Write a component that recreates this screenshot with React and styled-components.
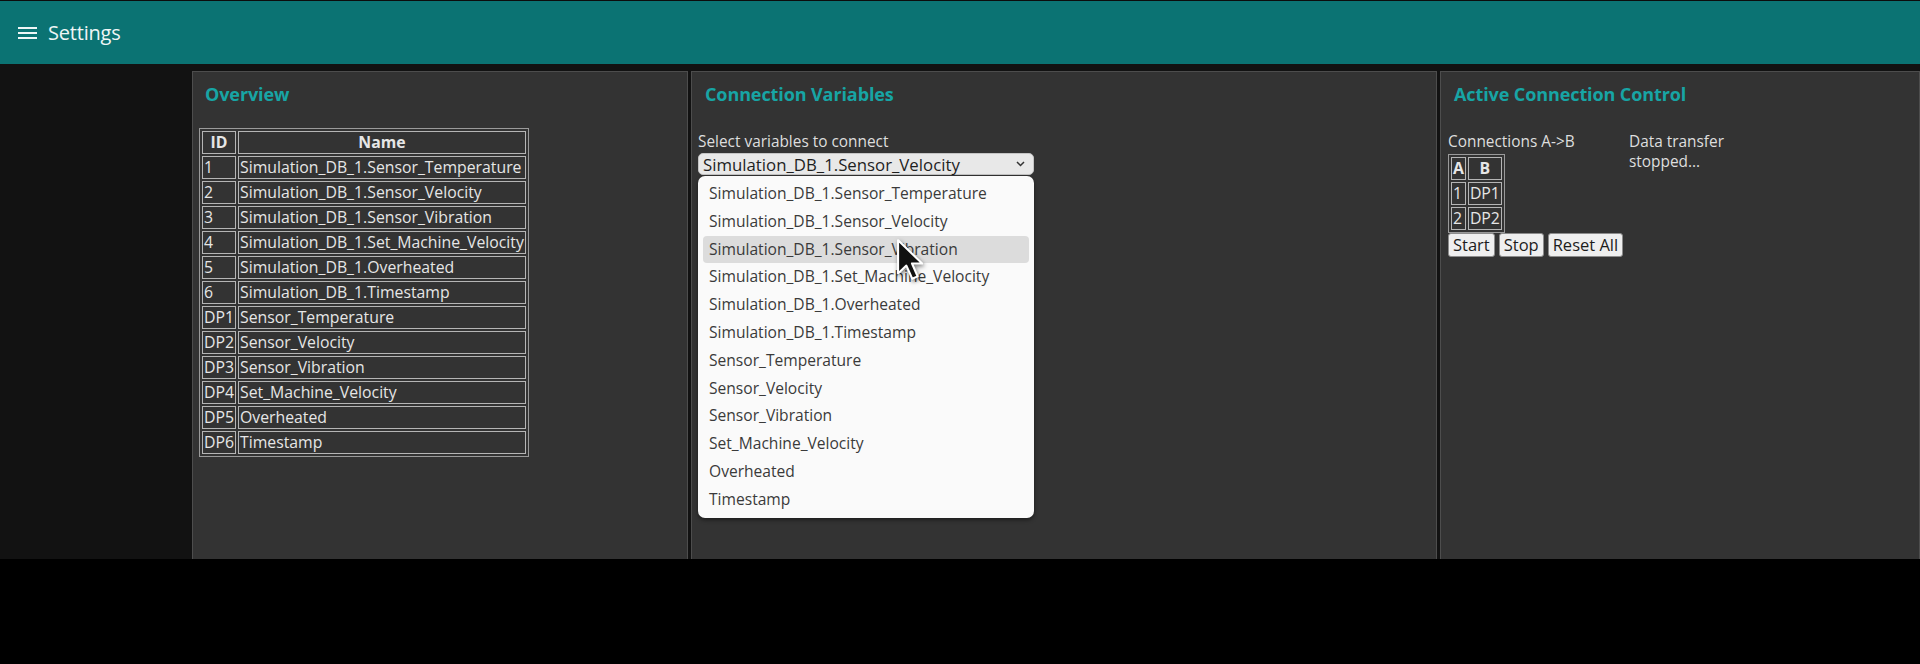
import React from "react";
import styled, { createGlobalStyle } from "styled-components";

const GlobalStyle = createGlobalStyle`
  html, body {
    margin: 0;
    padding: 0;
    background: #000;
  }
  body {
    font-family: "Open Sans", "Noto Sans", sans-serif;
  }
`;

const overviewRows = [
  ["1", "Simulation_DB_1.Sensor_Temperature"],
  ["2", "Simulation_DB_1.Sensor_Velocity"],
  ["3", "Simulation_DB_1.Sensor_Vibration"],
  ["4", "Simulation_DB_1.Set_Machine_Velocity"],
  ["5", "Simulation_DB_1.Overheated"],
  ["6", "Simulation_DB_1.Timestamp"],
  ["DP1", "Sensor_Temperature"],
  ["DP2", "Sensor_Velocity"],
  ["DP3", "Sensor_Vibration"],
  ["DP4", "Set_Machine_Velocity"],
  ["DP5", "Overheated"],
  ["DP6", "Timestamp"],
];

const connections = [
  ["1", "DP1"],
  ["2", "DP2"],
];

const Page = styled.div`
  width: 100%;
`;

const TopBar = styled.header`
  height: 63px;
  border-top: 1px solid #0c0c0c;
  background: #0b7373;
  display: flex;
  align-items: center;
  padding-left: 18px;
  gap: 11px;
  color: #eef6f6;
`;

const Title = styled.span`
  font-size: 20px;
  letter-spacing: -0.2px;
`;

const Main = styled.div`
  height: 495px;
  background: #121212;
  display: flex;
`;

const Sidebar = styled.aside`
  width: 192px;
  flex-shrink: 0;
`;

const Panels = styled.div`
  flex: 1;
  display: flex;
  gap: 3px;
  padding-top: 7px;
`;

const Panel = styled.section`
  width: ${(p) => p.$w};
  flex: ${(p) => (p.$w ? "none" : "1")};
  box-sizing: border-box;
  background: #333333;
  border: 1px solid #4d4d4d;
  border-bottom: none;
  padding: 6px;
  position: relative;
`;

const Heading = styled.h2`
  margin: 5px 0 0 ${(p) => p.$indent || 6}px;
  font-size: 18px;
  line-height: 22px;
  font-weight: 700;
  color: #17a5a5;
  letter-spacing: -0.1px;
`;

const Grid = styled.table`
  border: 1px solid #9a9a9a;
  border-spacing: 2px;
  color: #e6e6e6;
  font-size: 15.8px;
  margin-top: ${(p) => p.$top || 0}px;
  margin-left: ${(p) => p.$left || 0}px;
`;

const Cell = styled.td`
  border: 1px solid #b5b5b5;
  padding: 0 1px;
  height: 21px;
  line-height: 21px;
  text-align: left;
  white-space: nowrap;
`;

const HeadCell = styled.th`
  border: 1px solid #b5b5b5;
  padding: 0 1px;
  height: 21px;
  line-height: 21px;
  font-weight: 700;
  text-align: center;
`;

const Label = styled.div`
  font-size: 15.4px;
  line-height: 20px;
  color: #dedede;
  margin-top: ${(p) => p.$top || 0}px;
`;

const SelectWrap = styled.div`
  position: relative;
  width: 336px;
  margin-top: 1px;
`;

const SelectBox = styled.div`
  height: 22px;
  box-sizing: border-box;
  background: #e8e8e8;
  border: 1px solid #c4c4c4;
  border-radius: 5px;
  display: flex;
  align-items: center;
  justify-content: space-between;
  padding: 0 8px 0 4px;
  font-size: 16.8px;
  color: #1e1e1e;
`;

const DropList = styled.div`
  position: absolute;
  top: 23px;
  left: 0;
  width: 336px;
  box-sizing: border-box;
  padding: 4px 5px;
  background: #fafafa;
  border-radius: 7px;
  box-shadow: 0 2px 4px rgba(0, 0, 0, 0.45);
  z-index: 5;
`;

const Option = styled.div`
  height: 27.8px;
  line-height: 27.8px;
  padding-left: 6px;
  font-size: 15.6px;
  color: #3a3a3a;
  border-radius: 4px;
  background: ${(p) => (p.$active ? "#dcdcdc" : "transparent")};
  white-space: nowrap;
`;

const Cursor = styled.svg`
  position: absolute;
  left: 198px;
  top: 62px;
  z-index: 6;
  filter: drop-shadow(1px 2px 2px rgba(0, 0, 0, 0.5));
`;

const ControlRow = styled.div`
  display: flex;
  margin-top: 27px;
  margin-left: 1px;
`;

const ControlCol = styled.div`
  width: ${(p) => p.$w}px;
`;

const ButtonRow = styled.div`
  display: flex;
  gap: 4px;
`;

const Button = styled.button`
  height: 24px;
  padding: 0 4px;
  font-family: "Open Sans", "Noto Sans", sans-serif;
  font-size: 16.5px;
  line-height: 20px;
  color: #1c1c1c;
  background: #efefef;
  border: 1px solid #8c8c8c;
  border-radius: 3px;
`;

function MenuIcon() {
  return (
    <svg width="19" height="14" viewBox="0 0 19 14">
      <rect x="0" y="1" width="19" height="2" fill="#eef6f6" />
      <rect x="0" y="6" width="19" height="2" fill="#eef6f6" />
      <rect x="0" y="11" width="19" height="2" fill="#eef6f6" />
    </svg>
  );
}

function Chevron() {
  return (
    <svg width="9" height="6" viewBox="0 0 9 6">
      <path d="M1 1 L4.5 4.5 L8 1" fill="none" stroke="#333" strokeWidth="1.5" />
    </svg>
  );
}

export default function App() {
  const options = overviewRows.map((r) => r[1]);
  return (
    <Page>
      <GlobalStyle />
      <TopBar>
        <MenuIcon />
        <Title>Settings</Title>
      </TopBar>
      <Main>
        <Sidebar />
        <Panels>
          <Panel $w="496px">
            <Heading>Overview</Heading>
            <Grid $top={23}>
              <thead>
                <tr>
                  <HeadCell>ID</HeadCell>
                  <HeadCell>Name</HeadCell>
                </tr>
              </thead>
              <tbody>
                {overviewRows.map(([id, name]) => (
                  <tr key={id}>
                    <Cell>{id}</Cell>
                    <Cell>{name}</Cell>
                  </tr>
                ))}
              </tbody>
            </Grid>
          </Panel>

          <Panel $w="746px">
            <Heading $indent={7}>Connection Variables</Heading>
            <Label $top={27}>Select variables to connect</Label>
            <SelectWrap>
              <SelectBox>
                <span>Simulation_DB_1.Sensor_Velocity</span>
                <Chevron />
              </SelectBox>
              <DropList>
                {options.map((o, i) => (
                  <Option key={o} $active={i === 2}>
                    {o}
                  </Option>
                ))}
                <Cursor width="27" height="44" viewBox="0 0 13 21">
                  <path
                    d="M1 1 L1 17 L5 13.2 L7.8 19.5 L10.4 18.4 L7.7 12.2 L12.6 12.2 Z"
                    fill="#111"
                    stroke="#fff"
                    strokeWidth="1"
                    strokeLinejoin="round"
                  />
                </Cursor>
              </DropList>
            </SelectWrap>
          </Panel>

          <Panel>
            <Heading $indent={7}>Active Connection Control</Heading>
            <ControlRow>
              <ControlCol $w={181}>
                <Label>Connections A-&gt;B</Label>
                <Grid $top={2}>
                  <thead>
                    <tr>
                      <HeadCell>A</HeadCell>
                      <HeadCell>B</HeadCell>
                    </tr>
                  </thead>
                  <tbody>
                    {connections.map(([a, b]) => (
                      <tr key={a}>
                        <Cell>{a}</Cell>
                        <Cell>{b}</Cell>
                      </tr>
                    ))}
                  </tbody>
                </Grid>
                <ButtonRow>
                  <Button>Start</Button>
                  <Button>Stop</Button>
                  <Button>Reset All</Button>
                </ButtonRow>
              </ControlCol>
              <ControlCol $w={110}>
                <Label>Data transfer stopped...</Label>
              </ControlCol>
            </ControlRow>
          </Panel>
        </Panels>
      </Main>
    </Page>
  );
}
